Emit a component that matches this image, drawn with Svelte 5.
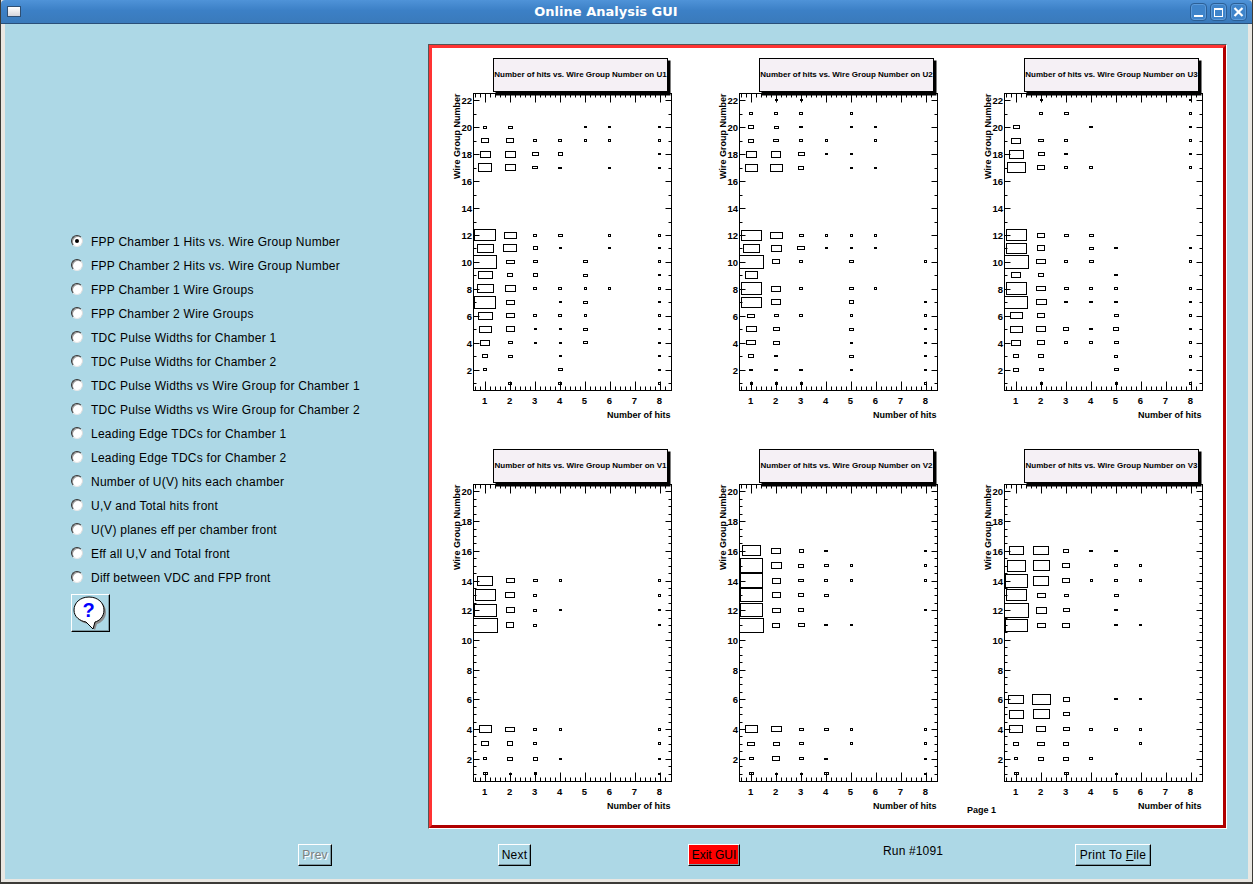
<script>
  const options = [
    'FPP Chamber 1 Hits vs. Wire Group Number',
    'FPP Chamber 2 Hits vs. Wire Group Number',
    'FPP Chamber 1 Wire Groups',
    'FPP Chamber 2 Wire Groups',
    'TDC Pulse Widths for Chamber 1',
    'TDC Pulse Widths for Chamber 2',
    'TDC Pulse Widths vs Wire Group for Chamber 1',
    'TDC Pulse Widths vs Wire Group for Chamber 2',
    'Leading Edge TDCs for Chamber 1',
    'Leading Edge TDCs for Chamber 2',
    'Number of U(V) hits each chamber',
    'U,V and Total hits front',
    'U(V) planes eff per chamber front',
    'Eff all U,V and Total front',
    'Diff between VDC and FPP front'
  ]

  let selected = $state(0)

  // one row per wire group: "wire col:WxH col:WxH ..." with box sizes in pixels
  const plots = [
    { name: 'U1', left: 473.5, top: 93.5, maxY: 22, rows: `
      20 1:4x3 2:5x3 5:3x2 6:3x2 8:3x2
      19 1:8x5 2:8x5 3:4x3 4:4x3 5:3x3 6:3x3 8:3x3
      18 1:11x7 2:11x7 3:7x4 4:5x4 8:3x2
      17 1:14x9 2:11x7 3:6x3 4:4x2 6:3x2 8:3x2
      12 1:22x12 2:13x7 3:4x3 4:5x3 6:3x3 8:3x3
      11 1:17x9 2:14x8 3:5x4 4:3x2 6:3x2 8:3x2
      10 1:24x14 2:9x4 3:5x3 5:5x3 8:3x3
      9 1:15x8 2:6x4 3:5x4 5:5x3 8:3x2
      8 1:17x9 2:11x7 3:4x3 4:4x3 5:3x3 6:3x3 8:3x3
      7 1:22x13 2:9x5 4:3x2 5:5x3 8:3x2
      6 1:15x8 2:9x5 3:4x3 4:4x3 5:3x3 8:3x3
      5 1:13x7 2:9x6 3:3x2 4:3x2 5:5x3 8:3x2
      4 1:10x6 2:5x3 3:3x2 4:3x2 5:5x3 8:3x2
      3 1:6x4 2:5x3 4:3x2 8:3x2
      2 1:4x3 4:5x3 8:3x2
      1 2:4x3 4:4x3 8:3x3` },
    { name: 'U2', left: 739.5, top: 93.5, maxY: 22, rows: `
      22 2:3x2 3:3x2
      21 1:4x3 2:4x3 3:4x3 5:3x3
      20 1:6x4 2:5x3 3:4x2 5:3x2 6:3x2
      19 1:6x4 2:6x3 3:4x3 4:3x3 6:3x3
      18 1:11x7 2:10x7 3:7x4 4:3x2 5:3x2
      17 1:13x8 2:13x8 3:6x4 5:3x2 6:3x2
      12 1:21x11 2:13x7 3:5x3 4:3x3 5:3x3 6:3x3
      11 1:17x9 2:11x7 3:8x4 4:3x2 5:3x2 6:3x2
      10 1:25x14 2:8x5 3:4x3 5:5x3 8:3x3
      9 1:13x8
      8 1:21x13 2:10x6 3:4x3 5:5x3 6:3x3
      7 1:21x11 2:10x6 5:5x4 8:3x2
      6 1:8x4 2:5x3 3:4x3 5:3x3 8:3x3
      5 1:11x6 2:7x4 5:5x3 8:3x2
      4 1:10x5 2:7x4 5:3x2 8:3x2
      3 1:6x4 2:4x2 5:5x3 8:3x2
      2 1:4x2 2:4x2 3:4x2 5:3x2 8:3x2
      1 1:3x3 2:3x3 3:3x3 8:3x3` },
    { name: 'U3', left: 1004.5, top: 93.5, maxY: 22, rows: `
      22 2:3x2 8:3x2
      21 2:4x3 3:5x3 8:3x3
      20 1:7x4 4:4x2 8:3x2
      19 1:10x6 2:6x3 3:4x3 8:3x3
      18 1:15x9 2:7x4 3:4x2 8:3x2
      17 1:19x11 2:8x5 3:4x3 4:4x3 8:3x3
      12 1:21x12 2:8x5 3:5x3 4:5x3
      11 1:21x11 2:8x6 4:5x3 5:4x2 8:3x2
      10 1:25x14 2:10x5 3:4x3 4:5x3 8:3x3
      9 1:10x6 2:6x4 5:4x2
      8 1:21x13 2:10x5 3:5x3 4:4x3 5:4x3 8:3x3
      7 1:24x13 2:11x6 3:4x2 4:4x2 5:4x2 8:3x2
      6 1:13x7 2:8x5 5:5x3 8:3x3
      5 1:13x7 2:10x6 3:6x4 4:4x2 5:6x4 8:3x2
      4 1:10x6 2:8x5 3:4x3 4:4x3 5:5x3 8:3x3
      3 1:6x4 2:6x4 5:4x3 8:3x3
      2 1:6x4 2:5x3 5:5x3 8:3x2
      1 2:3x3 5:3x3 8:3x3` },
    { name: 'V1', left: 473.5, top: 484.5, maxY: 20, rows: `
      14 1:16x10 2:9x5 3:5x3 4:3x3 8:3x3
      13 1:21x12 2:10x6 3:4x3 8:3x3
      12 1:23x13 2:9x6 3:4x3 4:3x2 8:3x2
      11 1:25x15 2:8x6 3:4x3 8:3x2
      4 1:13x8 2:10x5 3:4x3 4:3x3 8:3x3
      3 1:8x5 2:6x5 3:4x3 8:3x3
      2 1:4x3 2:6x4 3:5x4 4:3x2 8:3x2
      1 1:5x3 2:3x2 3:3x3 8:3x2` },
    { name: 'V2', left: 739.5, top: 484.5, maxY: 20, rows: `
      16 1:19x11 2:10x6 3:5x4 4:4x2 8:3x2
      15 1:23x15 2:11x7 3:6x4 4:5x3 5:3x3 8:3x3
      14 1:23x15 2:9x6 3:6x3 4:4x3 5:3x3 8:3x3
      13 1:23x14 2:9x6 3:6x4 4:5x3
      12 1:23x14 2:9x5 3:6x4 8:3x2
      11 1:25x15 2:8x5 3:7x4 4:4x2 5:3x2
      4 1:13x8 2:11x6 3:5x3 4:5x3 5:3x3 8:3x3
      3 1:8x4 2:7x4 3:5x3 5:3x3 8:3x3
      2 1:5x3 2:8x5 3:5x3 4:4x2 8:3x2
      1 1:5x3 2:3x2 3:3x2 4:5x3 8:3x2` },
    { name: 'V3', left: 1004.5, top: 484.5, maxY: 20, rows: `
      16 1:15x9 2:16x9 3:6x4 4:4x2 5:4x2
      15 1:19x12 2:17x11 3:8x5 5:4x3 6:3x3
      14 1:23x14 2:16x10 3:8x5 4:3x3 5:4x3 6:3x3
      13 1:21x12 2:9x5 3:5x3 5:5x3
      12 1:25x15 2:11x7 3:7x4 5:4x2
      11 1:23x13 2:9x5 3:8x5 5:4x2 6:3x2
      6 1:16x9 2:19x11 3:7x5 5:4x2 6:3x2
      5 1:15x9 2:17x10 3:7x4
      4 1:14x8 2:10x6 3:7x4 4:4x3 5:4x3 6:3x3
      3 1:6x4 2:8x4 3:6x4 6:3x3
      2 1:4x3 2:6x4 3:6x4 4:4x3
      1 1:5x3 3:5x3 5:3x2` }
  ]

  const W = 198
  const H = 297
  const colX = (v) => 12.2 + (v - 1) * 24.95
  const rowY = (p, v) => 7.4 + (p.maxY - v) * (p.maxY === 22 ? 13.46 : 14.85)

  // the group is already offset by half a pixel, so whole numbers stay crisp
  function parseBoxes(p) {
    const out = []
    for (const line of p.rows.trim().split('\n')) {
      const [wire, ...cells] = line.trim().split(/\s+/)
      for (const cell of cells) {
        const [c, size] = cell.split(':')
        const [w, h] = size.split('x').map(Number)
        out.push({
          x: Math.round(colX(+c) - w / 2),
          y: Math.round(rowY(p, +wire) - h / 2),
          w: w - 1,
          h: h - 1
        })
      }
    }
    return out
  }

  function ticksX() {
    const t = []
    for (let i = 1; i <= 39; i++) {
      t.push({ x: Math.round(colX(0.6 + (i - 1) * 0.2)), major: (i - 3) % 5 === 0 })
    }
    return t
  }

  function ticksY(p) {
    const t = []
    const step = p.maxY === 20 ? 0.5 : 1
    for (let v = 1; v <= p.maxY; v += step) {
      t.push({ y: Math.round(rowY(p, v)), major: v % 2 === 0 })
    }
    return t
  }

  const labelsY = (p) => Array.from({ length: p.maxY / 2 }, (_, i) => (i + 1) * 2)
  const cols = [1, 2, 3, 4, 5, 6, 7, 8]
</script>

<div class="window">
  <header class="titlebar">
    <span class="menu-btn"></span>
    <span class="title">Online Analysis GUI</span>
    <div class="wm-buttons">
      <span class="wm"><svg width="15" height="16" viewBox="0 0 15 16"><rect x="3" y="11" width="9" height="2" fill="#fff" /></svg></span>
      <span class="wm"><svg width="15" height="16" viewBox="0 0 15 16"><rect x="3.5" y="4.5" width="8" height="8" fill="none" stroke="#fff" /><rect x="3" y="4" width="9" height="2" fill="#fff" /></svg></span>
      <span class="wm"><svg width="15" height="16" viewBox="0 0 15 16"><path d="M3.5 4l8 8M11.5 4l-8 8" stroke="#fff" stroke-width="2.2" fill="none" /></svg></span>
    </div>
  </header>

  <div class="body">
    <div class="main">
      <aside class="options">
        {#each options as label, i}
          <button class="option" onclick={() => (selected = i)}>
            <span class="radio" class:on={selected === i}></span>
            <span class="option-text">{label}</span>
          </button>
        {/each}
        <button class="help" aria-label="Help">
          <svg width="35" height="35" viewBox="0 0 35 35">
            <path d="M18 3c9 0 15 6 15 13s-5 11-9 12l-2 6-6-6C8 27 3 23 3 16S9 3 18 3z" fill="#8c8c8c" />
            <path d="M16 1c9 0 15 6 15 13s-5 11-9 12l-2 7-7-7C7 25 1 21 1 14S7 1 16 1z" fill="#fff" stroke="#000" />
            <text x="15.5" y="20.5" class="qmark">?</text>
          </svg>
        </button>
      </aside>

      <div class="canvas">
        <div class="pad">
          <svg class="plots" viewBox="432 48 791 777" width="791" height="777">
            {#each plots as p}
              <g class="plot">
                <rect class="shadow" x={p.left + 22} y={p.top - 33} width="175" height="35" />
                <rect class="title-box" x={p.left + 20} y={p.top - 35} width="174" height="33" />
                <text class="plot-title" x={p.left + 107} y={p.top - 18.5}>Number of hits vs. Wire Group Number on {p.name}</text>

                <g transform="translate({p.left} {p.top})">
                  <rect class="frame" x="0" y="0" width={W} height={H} />
                  {#each ticksX() as k}
                    <path class="tick" d="M{k.x} {H}v{k.major ? -9 : -4}M{k.x} 0v{k.major ? 9 : 4}" />
                  {/each}
                  {#each ticksY(p) as k}
                    <path class="tick" d="M0 {k.y}h{k.major ? 6 : 3}M{W} {k.y}h{k.major ? -6 : -3}" />
                  {/each}
                  {#each parseBoxes(p) as b}
                    <rect class="box" x={b.x} y={b.y} width={b.w} height={b.h} />
                  {/each}
                  {#each cols as c}
                    <text class="num mid" x={colX(c) - 1} y={H + 13}>{c}</text>
                  {/each}
                  {#each labelsY(p) as v}
                    <text class="num end" x="-1.5" y={rowY(p, v) + 3.5}>{v}</text>
                  {/each}
                  <text class="axis end" x={W - 1} y={H + 27}>Number of hits</text>
                  <text class="axis end" transform="translate(-13.5 0) rotate(-90)">Wire Group Number</text>
                </g>
              </g>
            {/each}
            <text class="axis" x="967" y="813">Page 1</text>
          </svg>
        </div>
      </div>
    </div>

    <footer class="footer">
      <button class="btn prev" disabled>Prev</button>
      <button class="btn next">Next</button>
      <button class="btn exit">Exit GUI</button>
      <span class="run">Run #1091</span>
      <button class="btn print">Print To <u>F</u>ile</button>
    </footer>
  </div>
</div>

<style>
  :global(body) { margin: 0; background: #e6e4df; }
  .window {
    width: 1253px; height: 884px; box-sizing: border-box;
    display: flex; flex-direction: column;
    border: solid #3c3b37; border-width: 0 1px 2px 1px;
    background: #e9e7e2;
    font-family: "Liberation Sans", Arial, sans-serif;
    font-size: 12px; color: #000; overflow: hidden;
  }
  .titlebar {
    height: 24px; flex: none; position: relative; display: flex; align-items: center;
    padding: 0 5px 0 6px; box-sizing: border-box;
    background: linear-gradient(#4f93d8, #3c80c6 45%, #3a7abb);
    border-bottom: 1px solid #2a4f78;
    border-top-left-radius: 4px; border-top-right-radius: 4px;
  }
  .menu-btn {
    width: 12px; height: 9px; border: 1px solid #2f4f73;
    background: linear-gradient(#fff, #d5d5dc);
  }
  .title {
    position: absolute; left: 0; right: 0; text-align: center;
    color: #fff; font: bold 13px "DejaVu Sans", sans-serif; padding-right: 41px; box-sizing: border-box;
  }
  .wm-buttons { margin-left: auto; display: flex; gap: 3px; position: relative; }
  .wm {
    width: 15px; height: 16px; border: 1px solid #2c5f95; border-radius: 4px;
    display: flex; background: #3f84ca; box-shadow: inset 0 0 0 1px #5c9bdb;
  }
  .body {
    flex: 1; margin: 0 4px 3px 4px; background: #add8e6; display: flex; flex-direction: column;
  }
  .main { display: flex; padding-top: 20px; }
  .options {
    width: 423px; box-sizing: border-box; padding: 185px 0 0 66px;
    display: flex; flex-direction: column; align-items: flex-start;
  }
  .option {
    all: unset; display: flex; align-items: center; gap: 8px; height: 24px;
    letter-spacing: 0.245px; font-size: 12px; cursor: pointer;
  }
  .option-text { padding-top: 2px; }
  .radio {
    width: 12px; height: 12px; box-sizing: border-box; border-radius: 50%; background: #fff;
    border: 1px solid; border-color: #333 #dcdcdc #e8e8e8 #333; position: relative;
    box-shadow: inset 1px 1px 0 #999;
  }
  .radio.on::after {
    content: ''; position: absolute; left: 3px; top: 3px; width: 4px; height: 4px;
    border-radius: 50%; background: #000;
  }
  .help {
    all: unset; margin-top: 5px; width: 39px; height: 38px; box-sizing: border-box;
    display: flex; align-items: center; justify-content: center;
    border: 1px solid; border-color: #fff #000 #000 #fff;
    box-shadow: inset -1px -1px 0 #7c99a3;
  }
  .qmark { font: bold 20px "Liberation Sans", sans-serif; fill: #0000ff; text-anchor: middle; }

  .canvas {
    width: 799px; height: 785px; box-sizing: border-box;
    border: 1px solid; border-color: #555 #fff #fff #555;
  }
  .pad {
    height: 100%; box-sizing: border-box; background: #fff;
    border: 3px solid; border-color: #ff3333 #b00000 #b00000 #ff3333;
  }
  .plots { display: block; }
  .frame, .box { fill: none; stroke: #000; stroke-width: 1; }
  .tick { stroke: #000; stroke-width: 1; fill: none; }
  .title-box { fill: #f5f0f5; stroke: #000; stroke-width: 1; }
  .shadow { fill: #000; }
  .plot-title, .num, .axis { font-family: "Liberation Sans", Arial, sans-serif; font-weight: bold; fill: #000; }
  .plot-title { font-size: 8px; text-anchor: middle; dominant-baseline: middle; }
  .num { font-size: 9.5px; }
  .axis { font-size: 9px; }
  .mid { text-anchor: middle; }
  .end { text-anchor: end; }

  .footer { display: flex; align-items: flex-start; padding: 15px 0 0 293px; }
  .btn {
    all: unset; box-sizing: border-box; text-align: center; height: 22px; line-height: 19px;
    border: 1px solid; border-color: #fff #000 #000 #fff;
    box-shadow: inset -1px -1px 0 #7c99a3;
    font-size: 12px; letter-spacing: 0.25px; white-space: nowrap;
  }
  .prev { width: 34px; color: #7f7f7f; text-shadow: 1px 1px 0 #fff; }
  .next { margin-left: 166px; width: 33px; }
  .exit { margin-left: 157px; width: 52px; background: #f00; letter-spacing: 0; }
  .run { margin-left: 143px; width: 60px; line-height: 14px; white-space: nowrap; letter-spacing: 0.15px; }
  .print { margin-left: 132px; width: 76px; }
</style>
